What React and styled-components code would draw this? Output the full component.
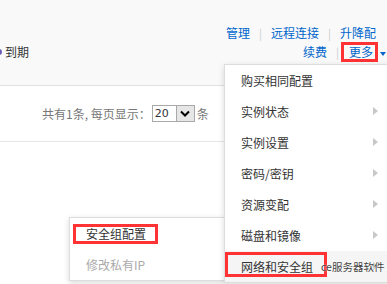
import React from 'react';
import styled, { createGlobalStyle } from 'styled-components';

const menuItems = [
    { label: '购买相同配置' },
    { label: '实例状态', sub: true },
    { label: '实例设置', sub: true },
    { label: '密码/密钥', sub: true },
    { label: '资源变配', sub: true },
    { label: '磁盘和镜像', sub: true },
    { label: '网络和安全组', sub: true, active: true },
];

const App = () => {
    return (
        <Page>
            <GlobalStyle />

            <Header>
                <Status>
                    <StatusDot />
                    到期
                </Status>

                <Actions>
                    <ActionRow $offset={11}>
                        <Link>管理</Link>
                        <Sep>|</Sep>
                        <Link>远程连接</Link>
                        <Sep>|</Sep>
                        <Link>升降配</Link>
                    </ActionRow>
                    <ActionRow $offset={1}>
                        <Link>续费</Link>
                        <Sep $right={2}>|</Sep>
                        <MoreBox>
                            <Link>更多</Link>
                        </MoreBox>
                        <Caret />
                    </ActionRow>
                </Actions>
            </Header>

            <Pager>
                <PagerText>共有1条, 每页显示：</PagerText>
                <Select>
                    <SelectValue>20</SelectValue>
                    <SelectButton>
                        <svg width="10" height="7" viewBox="0 0 10 7">
                            <path d="M1 1.5 L5 5.5 L9 1.5" fill="none" stroke="#000" strokeWidth="2" />
                        </svg>
                    </SelectButton>
                </Select>
                <PagerText>条</PagerText>
            </Pager>

            <Menu>
                {menuItems.map(item => (
                    <MenuItem key={item.label} $active={item.active}>
                        {item.label}
                        {item.sub && <Arrow />}
                        {item.active && <MarkFrame />}
                        {item.active && <Watermark>ce服务器软件</Watermark>}
                    </MenuItem>
                ))}
            </Menu>

            <SubMenu>
                <SubItem>
                    <Marked>安全组配置</Marked>
                </SubItem>
                <SubItem $disabled>修改私有IP</SubItem>
            </SubMenu>
        </Page>
    );
};

export default App;

const GlobalStyle = createGlobalStyle`
    html, body {
        margin: 0;
        padding: 0;
        background: #fff;
    }
    body {
        font-family: "Noto Sans CJK SC", "Noto Sans", sans-serif;
        font-size: 12px;
        color: #333;
    }
`;

const Page = styled.div`
    position: relative;
    width: 387px;
    height: 284px;
    overflow: hidden;
    background: #fff;
`;

const Header = styled.div`
    height: 85px;
    background: #f9f9f9;
    border-bottom: 1px solid #e0e0e0;
    display: flex;
    justify-content: space-between;
`;

const Status = styled.div`
    margin-top: 44px;
    margin-left: -4px;
    height: 16px;
    display: flex;
    align-items: center;
    gap: 3px;
    line-height: 16px;
    font-size: 12px;
    color: #333;
`;

const StatusDot = styled.span`
    width: 6px;
    height: 6px;
    border-radius: 50%;
    background: #6b5cb8;
`;

const Actions = styled.div`
    padding-top: 24px;
    display: flex;
    flex-direction: column;
    align-items: flex-end;
`;

const ActionRow = styled.div`
    display: flex;
    align-items: center;
    height: ${p => (p.$offset > 5 ? 18 : 20)}px;
    margin-right: ${p => p.$offset}px;
`;

const Link = styled.span`
    color: #0066cc;
    font-size: 12px;
    line-height: 14px;
`;

const Sep = styled.span`
    color: #ccc;
    font-size: 11px;
    line-height: 14px;
    margin: 0 ${p => p.$right ?? 9}px 0 9px;
`;

const MoreBox = styled.span`
    border: 3px solid #ff3333;
    padding: 0 2px 0 5px;
    display: inline-flex;
    align-items: center;
`;

const Caret = styled.span`
    width: 0;
    height: 0;
    margin-left: 2px;
    margin-top: 3px;
    border-left: 3px solid transparent;
    border-right: 3px solid transparent;
    border-top: 4px solid #0066cc;
`;

const Pager = styled.div`
    height: 55px;
    border-bottom: 1px solid #e5e5e5;
    padding-left: 42px;
    display: flex;
    align-items: center;
`;

const PagerText = styled.span`
    color: #777;
    font-size: 12px;
    line-height: 16px;
`;

const Select = styled.div`
    margin-left: 1px;
    margin-right: 2px;
    width: 41px;
    height: 15px;
    border: 1px solid #a9a9a9;
    background: #fff;
    display: flex;
`;

const SelectValue = styled.span`
    flex: 1;
    padding-left: 2px;
    font-family: "DejaVu Sans", sans-serif;
    font-size: 11px;
    line-height: 15px;
    color: #333;
`;

const SelectButton = styled.span`
    width: 17px;
    background: #e6e6e6;
    border-left: 1px solid #a9a9a9;
    display: flex;
    align-items: center;
    justify-content: center;
`;

const Menu = styled.div`
    position: absolute;
    left: 224px;
    top: 64px;
    width: 175px;
    background: #fff;
    border: 1px solid #ddd;
    box-shadow: 0 2px 6px rgba(0, 0, 0, 0.15);
    z-index: 2;
`;

const MenuItem = styled.div`
    position: relative;
    height: 31px;
    padding-left: 16px;
    display: flex;
    align-items: center;
    font-size: 12px;
    color: #333;
    background: ${p => (p.$active ? '#f5f5f5' : '#fff')};
`;

const Arrow = styled.span`
    position: absolute;
    left: 148px;
    top: 11px;
    width: 0;
    height: 0;
    border-top: 4px solid transparent;
    border-bottom: 4px solid transparent;
    border-left: 5px solid #c8c8c8;
`;

const MarkFrame = styled.span`
    position: absolute;
    left: 0;
    top: 1px;
    width: 102px;
    height: 25px;
    box-sizing: border-box;
    border: 3px solid #ff3333;
`;

const Watermark = styled.span`
    position: absolute;
    left: 96px;
    top: 9px;
    font-size: 10.5px;
    line-height: 13px;
    color: #444;
    text-shadow: 0 0 2px #fff;
`;

const SubMenu = styled.div`
    position: absolute;
    left: 69px;
    top: 217px;
    width: 154px;
    background: #fff;
    border: 1px solid #ddd;
    box-shadow: 0 2px 6px rgba(0, 0, 0, 0.15);
    z-index: 1;
`;

const SubItem = styled.div`
    height: 31px;
    padding-left: 16px;
    display: flex;
    align-items: center;
    font-size: 12px;
    color: ${p => (p.$disabled ? '#aaa' : '#333')};
`;

const Marked = styled.span`
    margin-left: -13px;
    padding: 0 9px 0 10px;
    border: 3px solid #ff3333;
    line-height: 14px;
`;
